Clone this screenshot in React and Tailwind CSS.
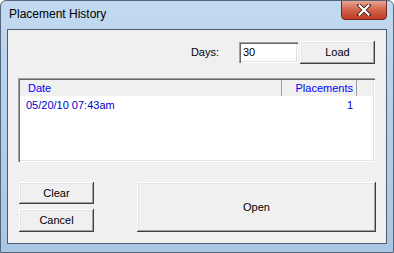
import React from "react";

const raised =
  "shadow-[inset_-1px_-1px_#404040,inset_1px_1px_#ffffff,inset_-2px_-2px_#a0a0a0,inset_2px_2px_#e3e3e3]";
const sunken =
  "shadow-[inset_1px_1px_#a0a0a0,inset_2px_2px_#696969,inset_-1px_-1px_#ffffff,inset_-2px_-2px_#e3e3e3]";

function Btn({ children, className = "" }) {
  return (
    <div
      className={`flex items-center justify-center bg-[#f0f0f0] text-black text-[11px] ${raised} ${className}`}
    >
      {children}
    </div>
  );
}

export default function App() {
  return (
    <div
      className="relative w-[394px] h-[253px] overflow-hidden rounded-t-[6px] border border-[#55667a] bg-gradient-to-b from-[#c2daf1] via-[#b3cfea] to-[#a9c6e4] flex flex-col"
      style={{ fontFamily: '"Liberation Sans", Arial, sans-serif' }}
    >
      {/* Title bar */}
      <div className="h-[28px] flex items-start shrink-0 relative">
        <div className="pl-[8px] pt-[7px] text-[12px] text-black leading-none">Placement History</div>
        <div className="absolute right-[6px] top-[-1px] w-[46px] h-[20px] rounded-b-[4px] border border-[#6b2a20] bg-gradient-to-b from-[#e9a493] via-[#d0634b] to-[#bf3a1f] flex items-center justify-center">
          <svg width="14" height="12" viewBox="0 0 14 12">
            <path d="M2 1 L12 11 M12 1 L2 11" stroke="#4a2018" strokeWidth="4" strokeLinecap="square" />
            <path d="M2.5 1.5 L11.5 10.5 M11.5 1.5 L2.5 10.5" stroke="#ffffff" strokeWidth="2.2" strokeLinecap="square" />
          </svg>
        </div>
      </div>
      {/* Client area */}
      <div className="mx-[6px] h-[215px] border border-[#4e5d6e] bg-[#f0f0f0] flex flex-col text-[11px]">
        {/* Days row */}
        <div className="mt-[11px] mr-[11px] flex items-center justify-end">
          <span className="text-black mr-[20px]">Days:</span>
          <div className={`w-[59px] h-[21px] bg-white flex items-center pl-[4px] text-black ${sunken}`}>30</div>
          <Btn className="ml-[2px] w-[75px] h-[23px]">Load</Btn>
        </div>
        {/* List view */}
        <div className={`mt-[14px] ml-[10px] mr-[11px] h-[84px] bg-white p-[2px] ${sunken} flex flex-col`}>
          <div className="h-[17px] bg-[#f0f0f0] flex text-[#0000ff] border-b border-white">
            <div className="w-[262px] pl-[8px] flex items-center border-r border-[#a0a0a0]">Date</div>
            <div className="w-[75px] flex items-center justify-end pr-[3px] border-r border-[#a0a0a0]">Placements</div>
            <div className="flex-1" />
          </div>
          <div className="h-[16px] flex items-center text-[#0000c8]">
            <div className="w-[262px] pl-[6px]">05/20/10 07:43am</div>
            <div className="w-[75px] text-right pr-[4px]">1</div>
          </div>
        </div>
        {/* Bottom buttons */}
        <div className="mt-[20px] ml-[11px] flex">
          <div className="flex flex-col gap-[5px]">
            <Btn className="w-[75px] h-[22px]">Clear</Btn>
            <Btn className="w-[75px] h-[23px]">Cancel</Btn>
          </div>
          <Btn className="ml-[43px] w-[239px] h-[50px]">Open</Btn>
        </div>
      </div>
    </div>
  );
}
